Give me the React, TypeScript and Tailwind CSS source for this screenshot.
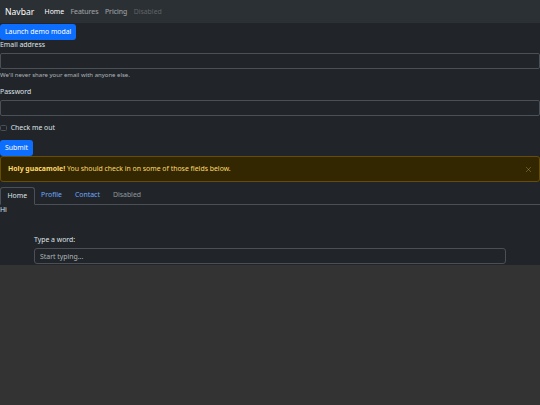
import { X } from "lucide-react";

const font = { fontFamily: '"Noto Sans", "DejaVu Sans", sans-serif' };

function Navbar() {
  return (
    <nav className="flex h-[23px] items-center bg-[#2b3035] px-[5px]">
      <a className="mr-[7px] text-[8.6px] leading-[12px] text-white">Navbar</a>
      <ul className="flex text-[6.9px] leading-[10px]">
        <li className="px-[3.2px] text-white">Home</li>
        <li className="px-[3.2px] text-white/55">Features</li>
        <li className="px-[3.2px] text-white/55">Pricing</li>
        <li className="px-[3.2px] text-white/25">Disabled</li>
      </ul>
    </nav>
  );
}

function Field({ label, help }: { label: string; help?: string }) {
  return (
    <div className="mb-[7px]">
      <label className="mb-[3px] block">{label}</label>
      <input className="block h-[16px] w-full rounded-[2px] border border-[#495057] bg-[#212529] outline-none" />
      {help && (
        <div className="mt-[2px] text-[6px] leading-[9px] text-[#dee2e6]/75">{help}</div>
      )}
    </div>
  );
}

export default function App() {
  return (
    <div className="min-h-[405px] bg-[#333333]" style={font}>
      <div className="bg-[#212529] pb-px text-[6.9px] leading-[10px] text-[#dee2e6]">
        <Navbar />

        <button className="mt-px h-[16px] rounded-[3px] bg-[#0d6efd] px-[5px] text-white">
          Launch demo modal
        </button>

        <form>
          <Field label="Email address" help="We'll never share your email with anyone else." />
          <Field label="Password" />

          <div className="mb-[7px] flex items-center gap-[4px]">
            <span className="h-[6.7px] w-[6.7px] rounded-[1.5px] border border-[#495057] bg-[#212529]" />
            <span>Check me out</span>
          </div>

          <button className="h-[16px] rounded-[3px] bg-[#0d6efd] px-[5px] text-white">
            Submit
          </button>
        </form>

        {/* warning alert */}
        <div className="mb-[5px] flex items-center justify-between rounded-[3px] border border-[#664d03] bg-[#332701] py-[7px] pl-[7px] pr-[6px] text-[#ffda6a]">
          <span>
            <strong className="font-bold">Holy guacamole!</strong> You should check in on some of
            those fields below.
          </span>
          <X size={9} strokeWidth={1.4} className="text-[#ffda6a]/50" />
        </div>

        {/* tabs */}
        <ul className="flex border-b border-[#495057]">
          <li className="-mb-px rounded-t-[3px] border border-[#495057] border-b-[#212529] bg-[#212529] px-[6.5px] py-[3px] text-[#dee2e6]">
            Home
          </li>
          <li className="px-[6.5px] py-[3px] text-[#6ea8fe]">Profile</li>
          <li className="px-[6.5px] py-[3px] text-[#6ea8fe]">Contact</li>
          <li className="px-[6.5px] py-[3px] text-[#dee2e6]/60">Disabled</li>
        </ul>
        <div>Hi</div>

        <div className="ml-[34px] mt-[20px] w-[472px]">
          <label className="mb-[3px] block">Type a word:</label>
          <input
            placeholder="Start typing..."
            className="block h-[16px] w-full rounded-[3px] border border-[#495057] bg-[#212529] px-[5px] text-[6.9px] outline-none placeholder:text-[#dee2e6]/75"
          />
        </div>
      </div>
    </div>
  );
}
